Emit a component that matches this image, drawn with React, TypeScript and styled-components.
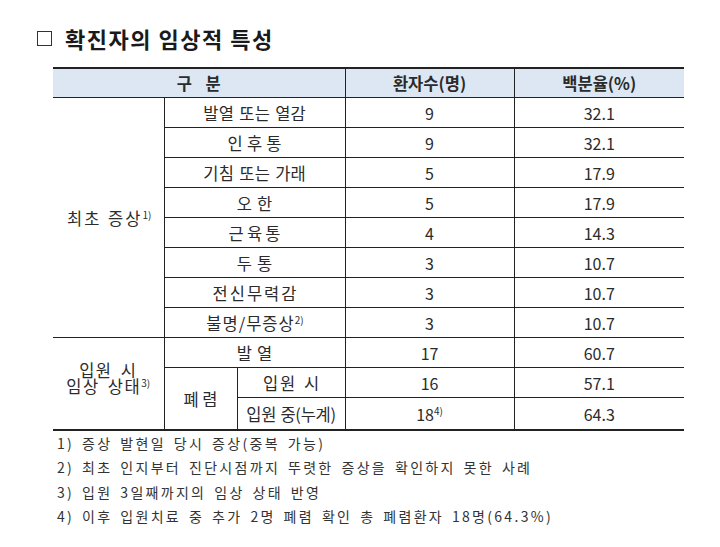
import React from "react";
import styled, { createGlobalStyle } from "styled-components";

const Global = createGlobalStyle`
  html, body { margin: 0; padding: 0; background: #fff; }
  body { font-family: "Noto Sans CJK KR", "Noto Sans", sans-serif; color: #2b2b2b; }
`;

const Page = styled.div`
  width: 720px;
  height: 547px;
  box-sizing: border-box;
  padding: 24px 0 0 37px;
`;

const Title = styled.h1`
  margin: 0;
  font-size: 22px;
  font-weight: 700;
  line-height: 28px;
  letter-spacing: 1.5px;
  color: #1a1a1a;
  display: flex;
  align-items: center;
  gap: 13px;
`;

const Box = styled.span`
  width: 15px;
  height: 15px;
  border: 1.5px solid #333;
  box-sizing: border-box;
  display: inline-block;
`;

const Table = styled.table`
  margin: 15px 0 0 16px;
  width: 631px;
  border-collapse: collapse;
  table-layout: fixed;
  font-size: 16px;
  color: #2b2b2b;
  border-top: 2px solid #222;
  border-bottom: 2px solid #222;
`;

const HeadCell = styled.th<{ $first?: boolean; $ls?: number }>`
  background: #dde7f3;
  font-weight: 700;
  font-size: 16.5px;
  height: 28px;
  padding: 0 0 0 ${(p) => p.$ls ?? 0}px;
  text-align: center;
  line-height: 20px;
  letter-spacing: ${(p) => p.$ls ?? 0}px;
  border-bottom: 1.5px solid #222;
  border-left: ${(p) => (p.$first ? "none" : "1px solid #222")};
`;

const Cell = styled.td<{ $first?: boolean; $ls?: number; $num?: boolean }>`
  height: 29px;
  padding: 0 0 0 ${(p) => p.$ls ?? 0}px;
  text-align: center;
  font-size: ${(p) => (p.$num ? "16px" : "16.5px")};
  line-height: 18px;
  letter-spacing: ${(p) => p.$ls ?? 0}px;
  word-spacing: 1px;
  border-top: 1px solid #222;
  border-left: ${(p) => (p.$first ? "none" : "1px solid #222")};
  white-space: nowrap;
`;

const TwoLine = styled.div`
  line-height: 16px;
  letter-spacing: 1.5px;
  word-spacing: 3px;
  padding-bottom: 12px;
`;

const Sup = styled.sup`
  font-size: 10px;
  line-height: 0;
  vertical-align: 6px;
  letter-spacing: 0;
`;

const Notes = styled.div`
  margin: 0 0 0 20px;
  font-size: 14px;
  line-height: 24.4px;
  letter-spacing: 2.3px;
  word-spacing: 2.5px;
  color: #333;
`;

const Note = styled.div``;

const symptoms: [React.ReactNode, number, string, string][] = [
  ["발열 또는 열감", 0.3, "9", "32.1"],
  ["인후통", 4.2, "9", "32.1"],
  ["기침 또는 가래", 0.3, "5", "17.9"],
  ["오한", 5, "5", "17.9"],
  ["근육통", 3.2, "4", "14.3"],
  ["두통", 5, "3", "10.7"],
  ["전신무력감", 2, "3", "10.7"],
  [<>불명/무증상<Sup>2)</Sup></>, 1, "3", "10.7"],
];

export default function App() {
  return (
    <Page>
      <Global />
      <Title>
        <Box />
        확진자의 임상적 특성
      </Title>
      <Table>
        <colgroup>
          <col style={{ width: 111 }} />
          <col style={{ width: 73 }} />
          <col style={{ width: 108 }} />
          <col style={{ width: 169 }} />
          <col style={{ width: 170 }} />
        </colgroup>
        <thead>
          <tr>
            <HeadCell $first colSpan={3} $ls={2}>구&nbsp;&nbsp;분</HeadCell>
            <HeadCell>환자수(명)</HeadCell>
            <HeadCell>백분율(%)</HeadCell>
          </tr>
        </thead>
        <tbody>
          {symptoms.map(([name, ls, n, pct], i) => (
            <tr key={i}>
              {i === 0 && (
                <Cell $first $ls={2} rowSpan={8}>
                  최초 증상<Sup>1)</Sup>
                </Cell>
              )}
              <Cell $ls={ls} colSpan={2}>{name}</Cell>
              <Cell $num>{n}</Cell>
              <Cell $num>{pct}</Cell>
            </tr>
          ))}
          <tr>
            <Cell $first rowSpan={3}>
              <TwoLine>
                입원 시<br />
                임상 상태<Sup>3)</Sup>
              </TwoLine>
            </Cell>
            <Cell $ls={5} colSpan={2}>발열</Cell>
            <Cell $num>17</Cell>
            <Cell $num>60.7</Cell>
          </tr>
          <tr>
            <Cell $ls={3.5} rowSpan={2}>폐렴</Cell>
            <Cell $ls={2}>입원 시</Cell>
            <Cell $num>16</Cell>
            <Cell $num>57.1</Cell>
          </tr>
          <tr>
            <Cell $ls={-0.3}>입원 중(누계)</Cell>
            <Cell $num>18<Sup>4)</Sup></Cell>
            <Cell $num>64.3</Cell>
          </tr>
        </tbody>
      </Table>
      <Notes>
        <Note>1) 증상 발현일 당시 증상(중복 가능)</Note>
        <Note>2) 최초 인지부터 진단시점까지 뚜렷한 증상을 확인하지 못한 사례</Note>
        <Note>3) 입원 3일째까지의 임상 상태 반영</Note>
        <Note>4) 이후 입원치료 중 추가 2명 폐렴 확인 총 폐렴환자 18명(64.3%)</Note>
      </Notes>
    </Page>
  );
}
